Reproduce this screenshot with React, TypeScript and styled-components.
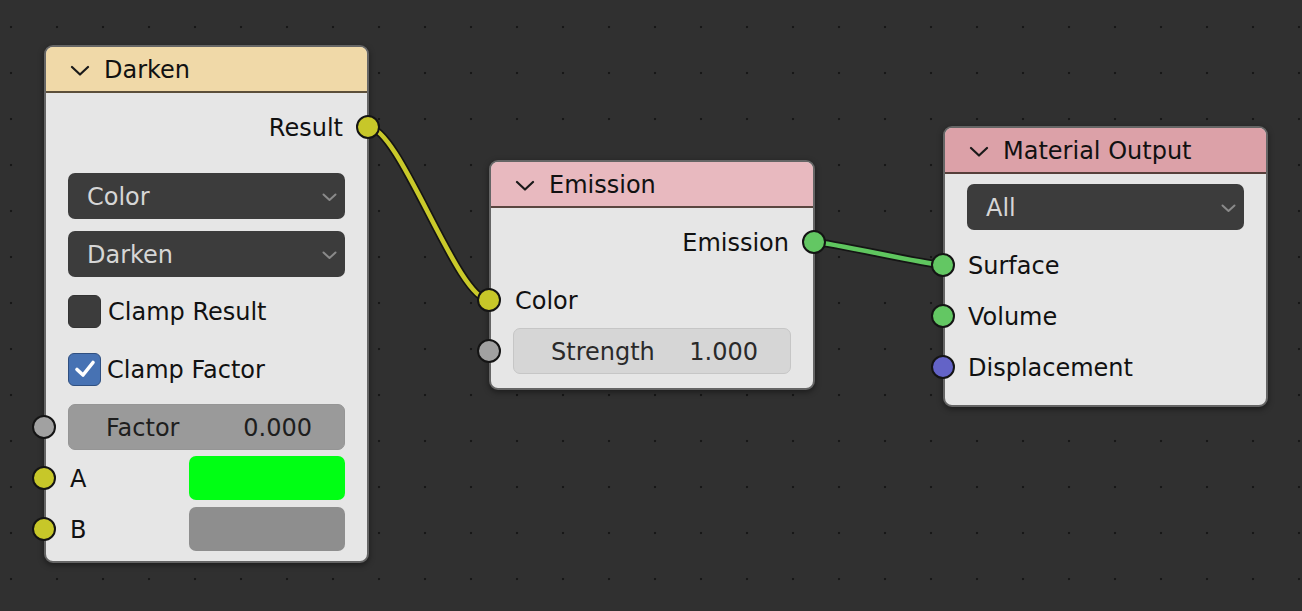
import styled, { createGlobalStyle } from "styled-components";

const GlobalStyle = createGlobalStyle`
  html, body {
    margin: 0;
    padding: 0;
    background: #303030;
  }
  body {
    font-family: "DejaVu Sans", "Liberation Sans", sans-serif;
  }
`;

const SOCKET = {
  yellow: "#c7c729",
  gray: "#a1a1a1",
  green: "#63c763",
  purple: "#6363c7",
};

type SocketColor = keyof typeof SOCKET;

const Canvas = styled.div`
  position: relative;
  width: 1302px;
  height: 611px;
  overflow: hidden;
  background-color: #303030;
  background-image: radial-gradient(circle, #171717 0 1px, transparent 1.6px);
  background-size: 46px 46px;
  background-position: -12px 4px;
`;

const Wires = styled.svg`
  position: absolute;
  left: 0;
  top: 0;
  width: 1302px;
  height: 611px;
`;

const Node = styled.div<{ $x: number; $y: number; $w: number }>`
  position: absolute;
  left: ${(p) => p.$x}px;
  top: ${(p) => p.$y}px;
  width: ${(p) => p.$w}px;
  box-sizing: border-box;
  border: 2px solid #656565;
  border-radius: 9px;
  background: #e6e6e6;
  box-shadow: 0 2px 6px rgba(0, 0, 0, 0.45);
`;

const Header = styled.div<{ $bg: string }>`
  display: flex;
  align-items: center;
  gap: 14px;
  height: 46px;
  box-sizing: border-box;
  padding: 2px 0 0 24px;
  background: ${(p) => p.$bg};
  border-bottom: 2px solid rgba(35, 25, 15, 0.72);
  border-radius: 7px 7px 0 0;
  font-size: 24px;
  color: #111;
`;

const Body = styled.div<{ $top: number; $bottom: number }>`
  display: flex;
  flex-direction: column;
  padding: ${(p) => p.$top}px 22px ${(p) => p.$bottom}px;
`;

const Row = styled.div<{ $mt?: number; $out?: boolean }>`
  position: relative;
  display: flex;
  align-items: center;
  justify-content: ${(p) => (p.$out ? "flex-end" : "flex-start")};
  height: 46px;
  margin-top: ${(p) => p.$mt ?? 0}px;
  padding-right: ${(p) => (p.$out ? 2 : 0)}px;
  font-size: 24px;
  color: #111;
`;

const Label = styled.span<{ $ml?: number }>`
  margin-left: ${(p) => p.$ml ?? 0}px;
  padding-top: 2px;
  white-space: nowrap;
`;

const Socket = styled.span<{ $color: SocketColor; $out?: boolean }>`
  position: absolute;
  top: 50%;
  ${(p) => (p.$out ? "right: -35px;" : "left: -36px;")}
  width: 24px;
  height: 24px;
  margin-top: -12px;
  box-sizing: border-box;
  border-radius: 50%;
  border: 2px solid #141414;
  background: ${(p) => SOCKET[p.$color]};
  z-index: 2;
`;

const Dropdown = styled.div`
  display: flex;
  align-items: center;
  justify-content: space-between;
  width: 100%;
  height: 46px;
  box-sizing: border-box;
  padding: 2px 8px 0 19px;
  border-radius: 7px;
  background: #3c3c3c;
  color: #d6d6d6;
  font-size: 24px;
`;

const Checkbox = styled.span<{ $on?: boolean }>`
  display: flex;
  align-items: center;
  justify-content: center;
  width: 33px;
  height: 33px;
  box-sizing: border-box;
  border-radius: 6px;
  background: ${(p) => (p.$on ? "#4772b3" : "#3c3c3c")};
  border: 1px solid ${(p) => (p.$on ? "#2f4f80" : "#333")};
`;

const Slider = styled.div<{ $light?: boolean }>`
  display: flex;
  align-items: center;
  justify-content: space-between;
  width: 100%;
  height: 46px;
  box-sizing: border-box;
  padding: 2px 32px 0 37px;
  border-radius: 7px;
  background: ${(p) => (p.$light ? "#d6d6d6" : "#9a9a9a")};
  border: 1px solid ${(p) => (p.$light ? "#c6c6c6" : "#959595")};
  color: ${(p) => (p.$light ? "#2a2a2a" : "#1e1e1e")};
  font-size: 24px;
`;

const Swatch = styled.span<{ $color: string }>`
  margin-left: auto;
  width: 156px;
  height: 44px;
  border-radius: 7px;
  background: ${(p) => p.$color};
`;

const HeaderChevron = () => (
  <svg width="20" height="11" viewBox="0 0 20 11">
    <path
      d="M2 2 L10 9.5 L18 2"
      fill="none"
      stroke="#1a1a1a"
      strokeWidth="2.2"
      strokeLinecap="round"
      strokeLinejoin="round"
    />
  </svg>
);

const MenuChevron = () => (
  <svg width="15" height="9" viewBox="0 0 15 9">
    <path
      d="M1.5 1.5 L7.5 7 L13.5 1.5"
      fill="none"
      stroke="#8a8a8a"
      strokeWidth="2"
      strokeLinecap="round"
      strokeLinejoin="round"
    />
  </svg>
);

const Check = () => (
  <svg width="24" height="22" viewBox="0 0 24 22">
    <path
      d="M4 11.5 L10 17 L20 4.5"
      fill="none"
      stroke="#ffffff"
      strokeWidth="3.6"
      strokeLinecap="round"
      strokeLinejoin="round"
    />
  </svg>
);

const Wire = ({ d, color }: { d: string; color: string }) => (
  <g fill="none" strokeLinecap="round">
    <path d={d} stroke="#141414" strokeWidth="8" />
    <path d={d} stroke={color} strokeWidth="4.6" />
  </g>
);

const App = () => {
  return (
    <Canvas>
      <GlobalStyle />
      <Wires viewBox="0 0 1302 611">
        <Wire d="M368 127 C 400 127, 457 300, 489 300" color="#c9c92a" />
        <Wire d="M814 242 C 834 243, 923 264, 943 265" color="#5fc65f" />
      </Wires>

      <Node $x={44} $y={45} $w={325}>
        <Header $bg="#f0d9a8">
          <HeaderChevron />
          <span>Darken</span>
        </Header>
        <Body $top={11} $bottom={9}>
          <Row $out>
            <Label>Result</Label>
            <Socket $color="yellow" $out />
          </Row>
          <Row $mt={23}>
            <Dropdown>
              <span>Color</span>
              <MenuChevron />
            </Dropdown>
          </Row>
          <Row $mt={12}>
            <Dropdown>
              <span>Darken</span>
              <MenuChevron />
            </Dropdown>
          </Row>
          <Row $mt={11}>
            <Checkbox />
            <Label $ml={7}>Clamp Result</Label>
          </Row>
          <Row $mt={12}>
            <Checkbox $on>
              <Check />
            </Checkbox>
            <Label $ml={6}>Clamp Factor</Label>
          </Row>
          <Row $mt={12}>
            <Socket $color="gray" />
            <Slider>
              <span>Factor</span>
              <span>0.000</span>
            </Slider>
          </Row>
          <Row $mt={5}>
            <Socket $color="yellow" />
            <Label $ml={2}>A</Label>
            <Swatch $color="#00ff14" />
          </Row>
          <Row $mt={5}>
            <Socket $color="yellow" />
            <Label $ml={2}>B</Label>
            <Swatch $color="#8e8e8e" />
          </Row>
        </Body>
      </Node>

      <Node $x={489} $y={160} $w={326}>
        <Header $bg="#e8b9bf">
          <HeaderChevron />
          <span>Emission</span>
        </Header>
        <Body $top={11} $bottom={14}>
          <Row $out>
            <Label>Emission</Label>
            <Socket $color="green" $out />
          </Row>
          <Row $mt={12}>
            <Socket $color="yellow" />
            <Label $ml={2}>Color</Label>
          </Row>
          <Row $mt={5}>
            <Socket $color="gray" />
            <Slider $light>
              <span>Strength</span>
              <span>1.000</span>
            </Slider>
          </Row>
        </Body>
      </Node>

      <Node $x={943} $y={126} $w={325}>
        <Header $bg="#dca1a8">
          <HeaderChevron />
          <span>Material Output</span>
        </Header>
        <Body $top={10} $bottom={15}>
          <Row>
            <Dropdown>
              <span>All</span>
              <MenuChevron />
            </Dropdown>
          </Row>
          <Row $mt={12}>
            <Socket $color="green" />
            <Label $ml={1}>Surface</Label>
          </Row>
          <Row $mt={5}>
            <Socket $color="green" />
            <Label $ml={1}>Volume</Label>
          </Row>
          <Row $mt={5}>
            <Socket $color="purple" />
            <Label $ml={1}>Displacement</Label>
          </Row>
        </Body>
      </Node>
    </Canvas>
  );
};

export default App;
